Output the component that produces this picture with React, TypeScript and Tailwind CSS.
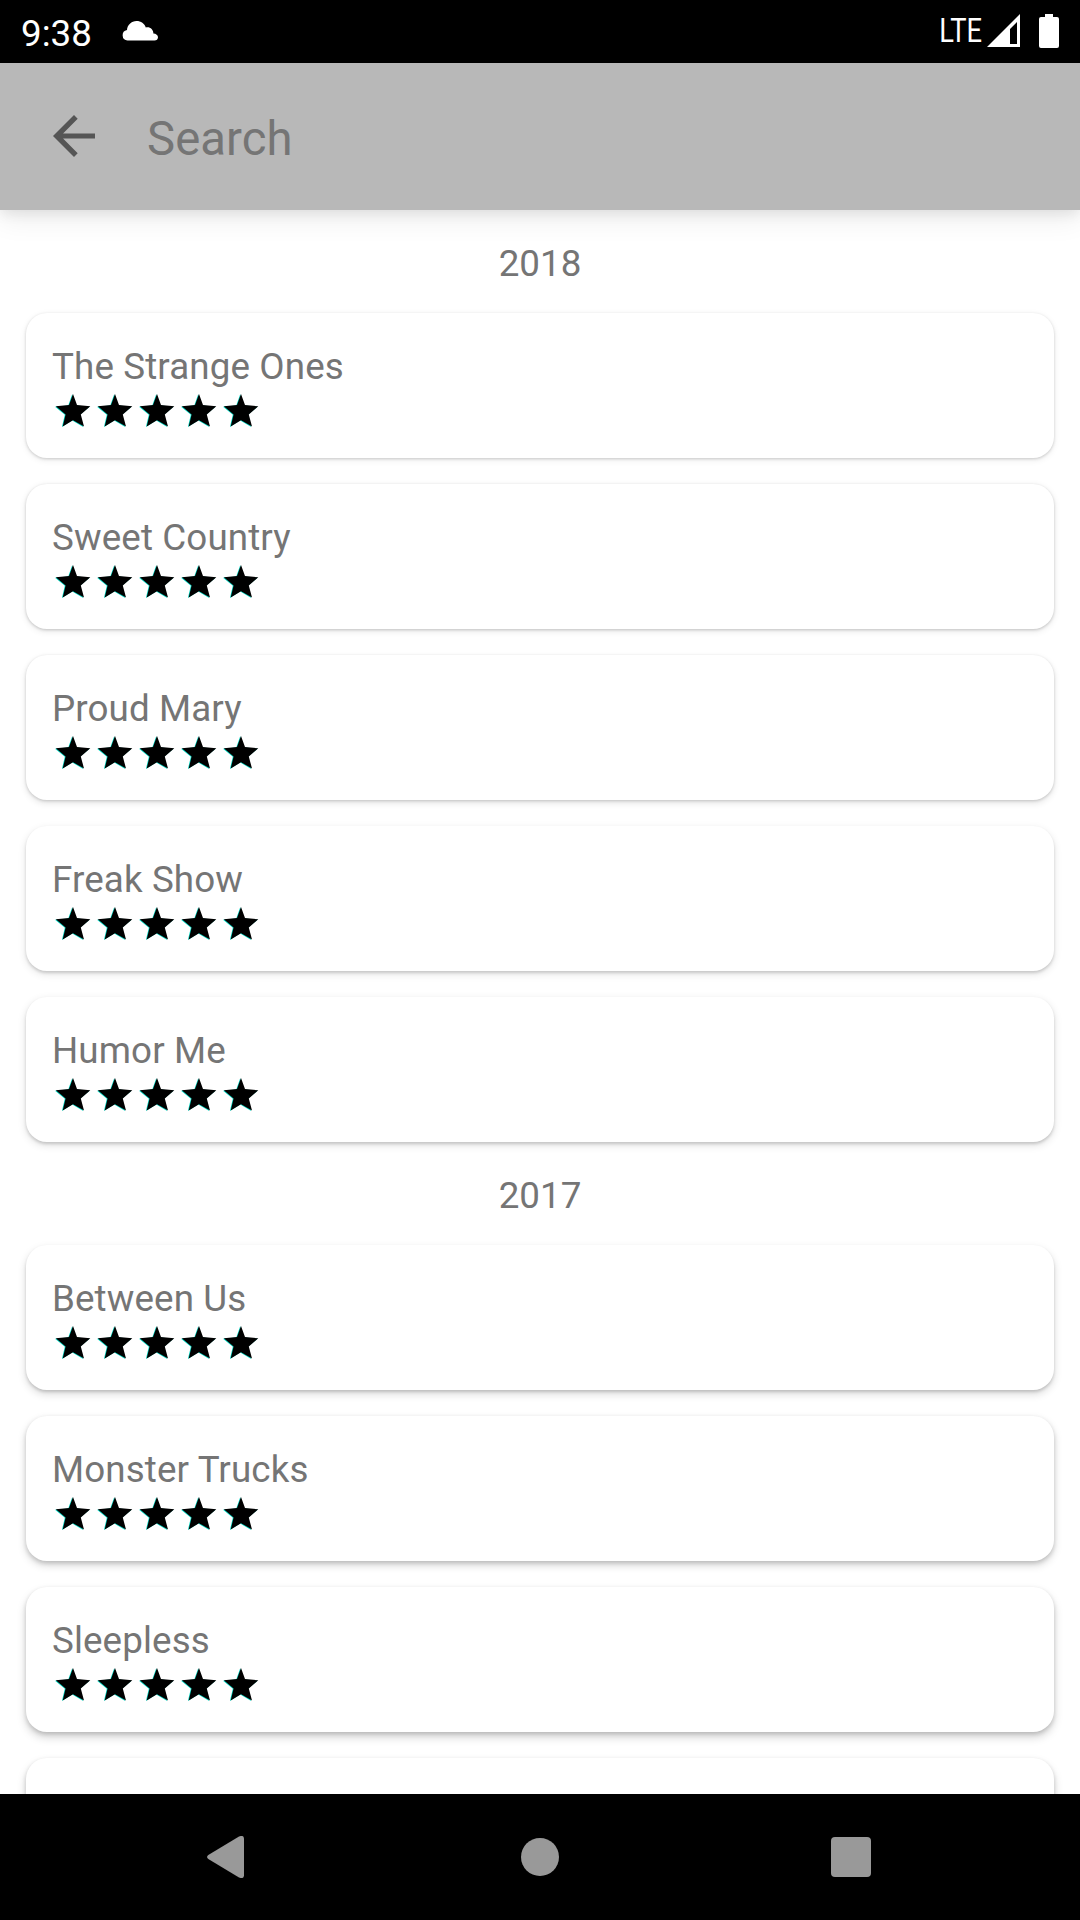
const sections = [
  { year: '2018', movies: ['The Strange Ones', 'Sweet Country', 'Proud Mary', 'Freak Show', 'Humor Me'] },
  { year: '2017', movies: ['Between Us', 'Monster Trucks', 'Sleepless', ''] },
];

// Shadows deepen the further down the screen a card sits.
const shadows = [
  'shadow-[0_1px_3px_rgba(0,0,0,0.17),0_2px_7px_rgba(0,0,0,0.08)]',
  'shadow-[0_1px_3px_rgba(0,0,0,0.18),0_2px_7px_rgba(0,0,0,0.10)]',
  'shadow-[0_1px_3px_rgba(0,0,0,0.17),0_3px_7px_rgba(0,0,0,0.11)]',
  'shadow-[0_2px_3px_rgba(0,0,0,0.15),0_3px_8px_rgba(0,0,0,0.11)]',
  'shadow-[0_2px_3px_rgba(0,0,0,0.15),0_3px_8px_rgba(0,0,0,0.13)]',
  'shadow-[0_2px_3px_rgba(0,0,0,0.15),0_4px_9px_rgba(0,0,0,0.15)]',
  'shadow-[0_2px_4px_rgba(0,0,0,0.15),0_4px_9px_rgba(0,0,0,0.17)]',
  'shadow-[0_2px_4px_rgba(0,0,0,0.15),0_5px_10px_rgba(0,0,0,0.18)]',
  'shadow-[0_2px_4px_rgba(0,0,0,0.15),0_5px_10px_rgba(0,0,0,0.18)]',
];

const STAR = '21,5.9 25,17 38.3,18.3 28.8,26.4 32,38.6 21,32.2 10.7,38.6 13.6,26.4 3.8,18.3 17,17';

function Star() {
  return (
    <svg viewBox="0 0 42 42" className="size-[42px]">
      <polygon points={STAR} fill="#03dac5" transform="translate(-0.8 0.4)" />
      <polygon points={STAR} fill="#000" />
    </svg>
  );
}

function Card({ title, shadow }: { title: string; shadow: string }) {
  return (
    <article className={`h-[145px] shrink-0 rounded-[21px] bg-white px-[26px] pt-[29px] ${shadow}`}>
      <h2 className="h-[46px] text-[36.75px] leading-[50px] tracking-[0.12px] whitespace-nowrap">{title}</h2>
      {title && (
        <div className="flex">
          {[0, 1, 2, 3, 4].map((i) => (
            <Star key={i} />
          ))}
        </div>
      )}
    </article>
  );
}

export default function App() {
  return (
    <div className="flex h-[1920px] w-[1080px] flex-col overflow-hidden bg-white font-['Roboto',sans-serif] text-[#757575]">
      <header className="flex h-[63px] shrink-0 items-center bg-black pl-[21px] text-white">
        <span className="mt-[5px] text-[36.75px] leading-none">9:38</span>
        <svg viewBox="0 0 36 20" className="mt-[-2px] ml-[30px] h-5 w-9" fill="#fff">
          <path d="M5.5 19.5A5.3 5.3 0 0 1 5 9C5.200 4 9.500 0 14.500 0C19 0 22.500 2.600 23.800 6.500C28 5.500 31.300 8.500 31.400 12.400C34 12.600 36 14 36 16.200C36 18.200 34.500 19.500 32.500 19.500Z" />
        </svg>
        <span className="mt-[-1px] ml-auto origin-right scale-x-[0.84] text-[32.5px] leading-none">LTE</span>
        <svg viewBox="0 0 33 33" className="mt-[-2px] ml-[5px] h-[33px] w-[33px]" fill="#fff" fillRule="evenodd">
          <path d="M0 33L33 0V33ZM23 30H30V8L23 15Z" />
        </svg>
        <svg viewBox="0 0 20 34" className="mt-[-1px] mr-[21px] ml-[19px] h-[34px] w-5" fill="#fff">
          <path d="M6 0H14V3H18Q20 3 20 5V32Q20 34 18 34H2Q0 34 0 32V5Q0 3 2 3H6Z" />
        </svg>
      </header>

      <div className="z-10 flex h-[147px] shrink-0 items-center bg-[#b8b8b8] pl-[53px] shadow-[0_4px_12px_rgba(0,0,0,0.08),0_10px_26px_rgba(0,0,0,0.07)]">
        <svg viewBox="0 0 42 42" className="mt-[-1px] size-[42px]" fill="#555">
          <path d="M42 18.400H10.050L24.700 3.700L21 0L0 21L21 42L24.700 38.300L10.050 23.600H42Z" />
        </svg>
        <span className="mt-[7px] ml-[52px] text-[47.25px] leading-none tracking-[0.1px]">Search</span>
      </div>

      <main className="flex min-h-0 flex-1 flex-col overflow-hidden">
        {sections.map((section, s) => (
          <section key={section.year} className="flex shrink-0 flex-col px-[26px]">
            <h1 className="h-[103px] text-center text-[36.75px] leading-[108px]">{section.year}</h1>
            <div className="flex flex-col gap-[26px]">
              {section.movies.map((title, i) => (
                <Card key={i} title={title} shadow={shadows[s * 5 + i]} />
              ))}
            </div>
          </section>
        ))}
      </main>

      <nav className="z-10 flex h-[126px] shrink-0 items-center justify-between bg-black pr-[209px] pl-[207px]">
        <svg viewBox="0 0 37 42" className="h-[42px] w-[37px]" fill="#999">
          <path d="M1.300 19Q-1.200 21 1.300 23L32 41.400Q36.500 43.500 37 39.500V2.500Q36.500 -1.500 32 0.600Z" />
        </svg>
        <div className="ml-[5px] size-[38px] rounded-full bg-[#999]" />
        <div className="size-10 rounded-[4px] bg-[#999]" />
      </nav>
    </div>
  );
}
